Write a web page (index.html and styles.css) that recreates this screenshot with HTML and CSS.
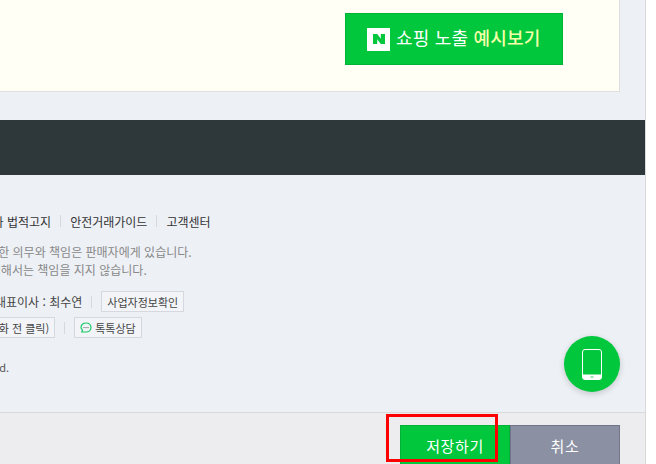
FILE: index.html
```html
<!DOCTYPE html>
<html lang="ko">
<head>
<meta charset="utf-8">
<title>쇼핑 노출 예시보기</title>
<link rel="stylesheet" href="styles.css">
</head>
<body>
<div class="page">
  <section class="hero">
    <a class="preview-btn">
      <span class="n-logo"><svg width="12" height="10" viewBox="0 0 12 10"><path d="M0 0h4.200l3.600 4.800V0H12v10H7.800L4.200 5.200V10H0z" fill="#00c73c"/></svg></span>
      <span class="preview-text">쇼핑 노출 <em>예시보기</em></span>
    </a>
  </section>
  <div class="dark-band"></div>
  <footer class="footer">
    <nav class="row links">
      <span class="clip-a">책임의 한계와 법적고지</span><i class="sep"></i><span>안전거래가이드</span><i class="sep"></i><span>고객센터</span>
    </nav>
    <p class="notice"><span class="clip-b">상품, 상품정보, 거래에 관한 의무와 책임은 판매자에게 있습니다.</span><br><span class="clip-c">판매자가 등록한 상품정보 및 거래 등에 대해서는 책임을 지지 않습니다.</span></p>
    <div class="row info"><span class="clip-d">네이버 주식회사 대표이사 : 최수연</span><i class="sep"></i><a class="tag">사업자정보확인</a></div>
    <div class="row info second"><a class="tag clip-e">(전화 전 클릭)</a><i class="sep"></i><a class="tag"><svg class="talk" width="12" height="12" viewBox="0 0 12 12"><path d="M6 1c2.900 0 5 2 5 4.500S8.900 10 6 10H1.800l.7-1.900C1.500 7.300 1 6.500 1 5.500 1 3 3.100 1 6 1z" fill="none" stroke="#17c964" stroke-width="1.200"/><path d="M3.500 5.600h1M5.500 5.600h1M7.500 5.600h1" stroke="#555" stroke-width="1"/></svg>톡톡상담</a></div>
    <p class="copy"><span class="clip-f">All rights reserved.</span></p>
  </footer>
  <div class="action-bar">
    <button class="btn save">저장하기</button><button class="btn cancel">취소</button>
  </div>
</div>
<a class="fab"><svg width="20" height="31" viewBox="0 0 20 31"><rect x=".5" y=".5" width="19" height="30" rx="2.500" fill="none" stroke="#fff" stroke-width="1"/><path d="M.5 25.500h19v2.500a2.500 2.500 0 0 1-2.500 2.500H3A2.500 2.500 0 0 1 .5 28z" fill="#fff"/><rect x="8.500" y="27" width="3" height="2" fill="#9be8b4"/></svg></a>
<div class="highlight"></div>
</body>
</html>
```
FILE: styles.css
```css
* { box-sizing: border-box; }
html, body { margin: 0; height: 100%; background: #fff; overflow: hidden; }
body { font-family: "Noto Sans CJK KR", "Noto Sans", sans-serif; }
.page { width: 646px; height: 464px; background: #edf0f5; border-right: 1px solid #d9d9d9; overflow: hidden; }
.hero { width: 620px; height: 92px; background: #fffff6; border: 1px solid #dedede; border-width: 0 1px 1px 0; padding: 13px 0 0 345px; }
.preview-btn { display: flex; align-items: center; width: 218px; height: 52px; background: #00c73c; border: 1px solid #00b236; padding-left: 21px; color: #fff; font-size: 18px; }
.n-logo { display: flex; align-items: center; justify-content: center; width: 23px; height: 23px; background: #fff; margin-right: 6px; }
.preview-text { white-space: nowrap; position: relative; top: -2px; letter-spacing: .2px; }
.preview-text em { font-style: normal; color: #f5ffa8; font-weight: 500; }
.dark-band { height: 55px; margin-top: 28px; background: #2e373a; }
.footer { height: 237px; padding-top: 37px; font-size: 12px; color: #444; overflow: hidden; white-space: nowrap; }
.row { display: flex; align-items: center; }
.links { height: 18px; color: #333; }
.clip-a { margin-left: -66px; }
.sep { display: block; width: 1px; height: 12px; background: #d5d8de; margin: 0 9px; }
.notice { margin: 13px 0 0; line-height: 18px; color: #888; }
.clip-b { margin-left: -129px; }
.clip-c { margin-left: -207px; }
.info { margin-top: 12px; height: 21px; }
.second { margin-top: 5px; }
.clip-d { margin-left: -89px; }
.tag { display: flex; align-items: center; height: 21px; padding: 0 5px; background: #f2f4f8; border: 1px solid #d5d8de; font-size: 11px; color: #444; }
.clip-e { margin-left: -21px; }
.talk { margin-right: 3px; }
.copy { margin: 22px 0 0; font-size: 11px; line-height: 14px; color: #555; }
.clip-f { margin-left: -87px; }
.action-bar { display: flex; height: 52px; padding: 12px 0 0 400px; background: #ededf0; border-top: 1px solid #d9d9d9; }
.btn { width: 110px; height: 46px; padding: 0 0 5px; border: 1px solid; font: 15px "Noto Sans CJK KR", sans-serif; letter-spacing: .6px; color: #fff; flex: none; }
.save { background: #00c73c; border-color: #00b236; }
.cancel { background: #8b90a3; border-color: #71768c; }
.fab { position: absolute; left: 564px; top: 336px; width: 56px; height: 56px; border-radius: 50%; background: #00c73c; display: flex; align-items: center; justify-content: center; box-shadow: 0 2px 6px rgba(0,0,0,.18); }
.highlight { position: absolute; left: 386px; top: 414px; width: 112px; height: 48px; border: 3px solid #f00; }
```
